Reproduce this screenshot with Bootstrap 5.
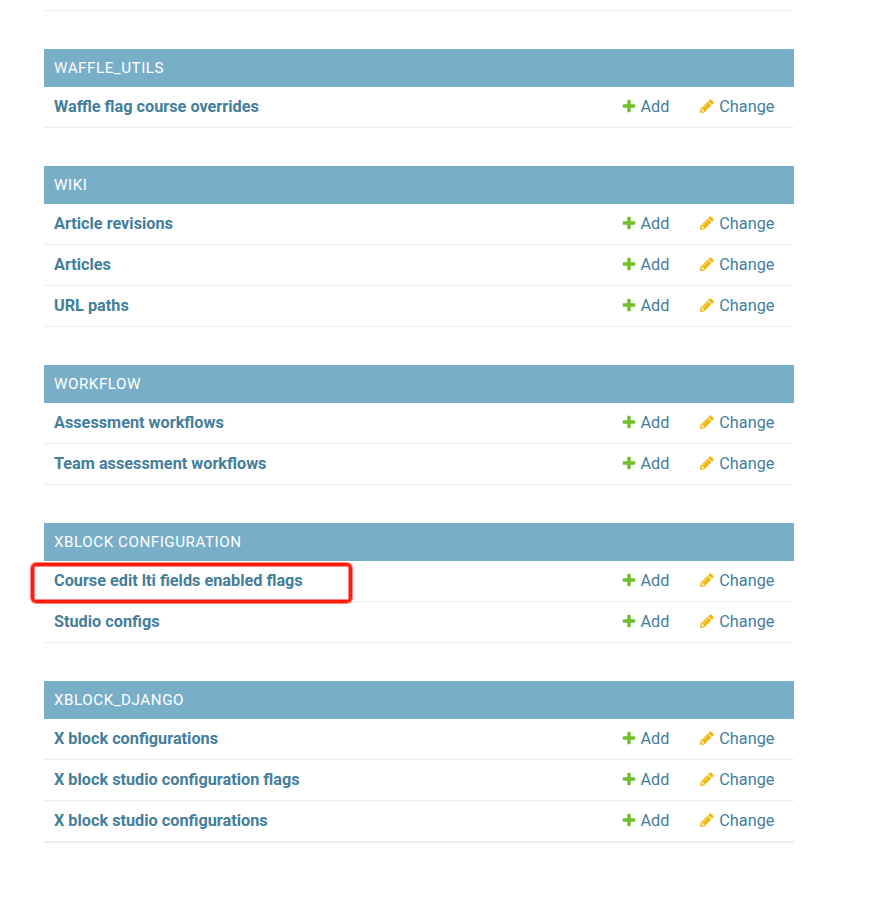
<!DOCTYPE html>
<html lang="en">
<head>
<meta charset="utf-8">
<meta name="viewport" content="width=device-width, initial-scale=1">
<title>Site administration</title>
<link href="https://cdn.jsdelivr.net/npm/bootstrap@5.3.0/dist/css/bootstrap.min.css" rel="stylesheet">
<style>
body{font-family:Roboto,"Liberation Sans",sans-serif;font-size:16.25px;color:#447e9b;background:#fff;overflow:hidden}
.apps{width:750px;margin-left:44px}
.top-rule{height:11px;border-bottom:1px solid #eee;margin-bottom:38px}
.app-module{margin-bottom:38px}
.app-module:last-child{border-bottom:1px solid #eee}
.app-title{height:38px;line-height:38px;padding:0 10px;background:#79aec8;color:#fff;font-size:15.2px;letter-spacing:.53px;font-weight:400}
.model-row{height:41px;padding:0 10px;border-bottom:1px solid #eee;line-height:20px}
.model-row a{color:#447e9b}
.model-row .fw-bold{font-weight:600}
.add-link{width:78px}
.change-link{width:85px}
.link-text{padding-left:3.4px}
.change-link .link-text{padding-left:4.3px}
.model-row svg{display:block;flex:none;margin-bottom:2px}
.highlight-box{left:-13px;top:2px;width:321px;height:40px;border:3px solid #ff1c0e;border-radius:5px;box-shadow:0 0 0 1px #ff1c0e88,inset 0 0 0 1px #ff1c0e88;pointer-events:none}
</style>
</head>
<body>
<svg width="0" height="0" class="position-absolute">
<symbol id="plus" viewBox="0 0 1792 1792"><path fill="#70bf2b" d="M1600 796v192q0 40-28 68t-68 28h-416v416q0 40-28 68t-68 28H800q-40 0-68-28t-28-68v-416H288q-40 0-68-28t-28-68V796q0-40 28-68t68-28h416V284q0-40 28-68t68-28h192q40 0 68 28t28 68v416h416q40 0 68 28t28 68z"/></symbol>
<symbol id="pencil" viewBox="0 0 1792 1792"><path fill="#efb80b" d="M491 1536l91-91-235-235-91 91v107h128v128h107zm523-928q0-22-22-22-10 0-17 7l-542 542q-7 7-7 17 0 22 22 22 10 0 17-7l542-542q7-7 7-17zm-54-192l416 416-832 832H128v-416zm683 96q0 53-37 90l-166 166-416-416 166-165q36-38 90-38 53 0 91 38l235 234q37 39 37 91z"/></symbol>
</svg>
<main class="apps" id="apps"><div class="top-rule"></div></main>
<script src="https://cdn.jsdelivr.net/npm/bootstrap@5.3.0/dist/js/bootstrap.bundle.min.js"></script>
<script>
const apps = [
 ['WAFFLE_UTILS', ['Waffle flag course overrides']],
 ['WIKI', ['Article revisions', 'Articles', 'URL paths']],
 ['WORKFLOW', ['Assessment workflows', 'Team assessment workflows']],
 ['XBLOCK CONFIGURATION', ['Course edit lti fields enabled flags', 'Studio configs']],
 ['XBLOCK_DJANGO', ['X block configurations', 'X block studio configuration flags', 'X block studio configurations']]
];
const icon = id => `<svg width="16" height="16" aria-hidden="true"><use href="#${id}"/></svg>`;
document.getElementById('apps').insertAdjacentHTML('beforeend', apps.map(([title, models]) =>
 `<section class="app-module"><h2 class="app-title m-0">${title}</h2>${models.map(m =>
 `<div class="model-row d-flex align-items-center position-relative"><a href="#" class="fw-bold text-decoration-none me-auto">${m}</a><a href="#" class="add-link d-flex align-items-center text-decoration-none">${icon('plus')}<span class="link-text">Add</span></a><a href="#" class="change-link d-flex align-items-center text-decoration-none">${icon('pencil')}<span class="link-text">Change</span></a>${m.startsWith('Course') ? '<span class="highlight-box position-absolute"></span>' : ''}</div>`).join('')}</section>`).join(''));
</script>
</body>
</html>
